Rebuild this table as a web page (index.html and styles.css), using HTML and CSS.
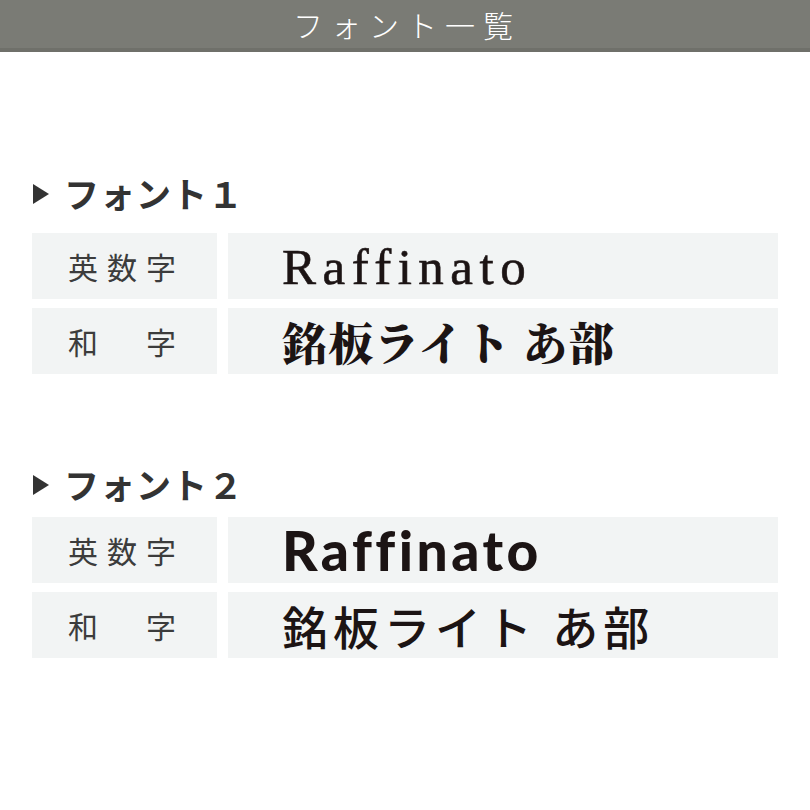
FILE: index.html
```html
<!DOCTYPE html>
<html lang="ja">
<head>
<meta charset="utf-8">
<title>フォント一覧</title>
<link rel="stylesheet" href="styles.css">
</head>
<body>
<header class="page-header">
  <h1 class="page-title">フォント一覧</h1>
</header>
<main class="content">
  <section class="font-section font-section--first">
    <h2 class="font-heading"><span class="tri"></span>フォント１</h2>
    <div class="font-table">
      <div class="label">英数字</div>
      <div class="sample sample--serif-en">Raffinato</div>
      <div class="label">和　字</div>
      <div class="sample sample--serif-ja">銘板ライト あ部</div>
    </div>
  </section>
  <section class="font-section font-section--second">
    <h2 class="font-heading"><span class="tri"></span>フォント２</h2>
    <div class="font-table">
      <div class="label">英数字</div>
      <div class="sample sample--sans-en">Raffinato</div>
      <div class="label">和　字</div>
      <div class="sample sample--sans-ja">銘板ライト あ部</div>
    </div>
  </section>
</main>
</body>
</html>
```
FILE: styles.css
```css
* { box-sizing: border-box; }
html, body { margin: 0; padding: 0; background: #fff; }
body {
  width: 810px;
  height: 810px;
  font-family: "Noto Sans CJK JP", "Noto Sans", sans-serif;
  color: #333;
}
.page-header {
  height: 52px;
  background: #7a7b75;
  border-bottom: 4px solid #6f706a;
  display: flex;
  align-items: center;
  justify-content: center;
}
.page-title {
  margin: 0;
  font-size: 30px;
  font-weight: 300;
  color: #fff;
  letter-spacing: 8px;
  line-height: 48px;
  padding-left: 4px;
}
.content {
  padding: 0 32px;
}
.font-section--first { padding-top: 121px; }
.font-section--second { padding-top: 90px; }
.font-heading {
  margin: 0;
  height: 40px;
  display: flex;
  align-items: center;
  font-size: 35px;
  font-weight: 700;
  color: #333;
  letter-spacing: 1px;
  line-height: 40px;
}
.tri {
  width: 0;
  height: 0;
  border-top: 10px solid transparent;
  border-bottom: 10px solid transparent;
  border-left: 16px solid #333;
  margin-left: 1px;
  margin-right: 15px;
  margin-top: 2px;
}
.font-section--first .font-table { margin-top: 20px; }
.font-section--second .font-table { margin-top: 13px; }
.font-table {
  display: grid;
  grid-template-columns: 185px 550px;
  grid-auto-rows: 66px;
  column-gap: 11px;
  row-gap: 9px;
}
.label {
  background: #f2f4f4;
  display: flex;
  align-items: center;
  padding-left: 36px;
  font-size: 30px;
  font-weight: 400;
  letter-spacing: 9px;
  color: #3c3c3c;
}
.sample {
  background: #f2f4f4;
  display: flex;
  align-items: center;
  padding-left: 54px;
  color: #1c1414;
}
.sample--serif-en {
  font-family: "Liberation Serif", serif;
  font-size: 51px;
  letter-spacing: 6.5px;
  padding-top: 2px;
  -webkit-text-stroke: 0.6px #1c1414;
}
.sample--serif-ja {
  font-family: "Noto Serif CJK JP", "Noto Sans CJK JP", serif;
  font-size: 45px;
  font-weight: 900;
  letter-spacing: 1px;
}
.sample--sans-en {
  font-family: "Lato", "Noto Sans", sans-serif;
  font-size: 55px;
  font-weight: 900;
  letter-spacing: 3.5px;
}
.sample--sans-ja {
  font-family: "Noto Sans CJK JP", sans-serif;
  font-size: 46px;
  font-weight: 500;
  letter-spacing: 5px;
}
```
